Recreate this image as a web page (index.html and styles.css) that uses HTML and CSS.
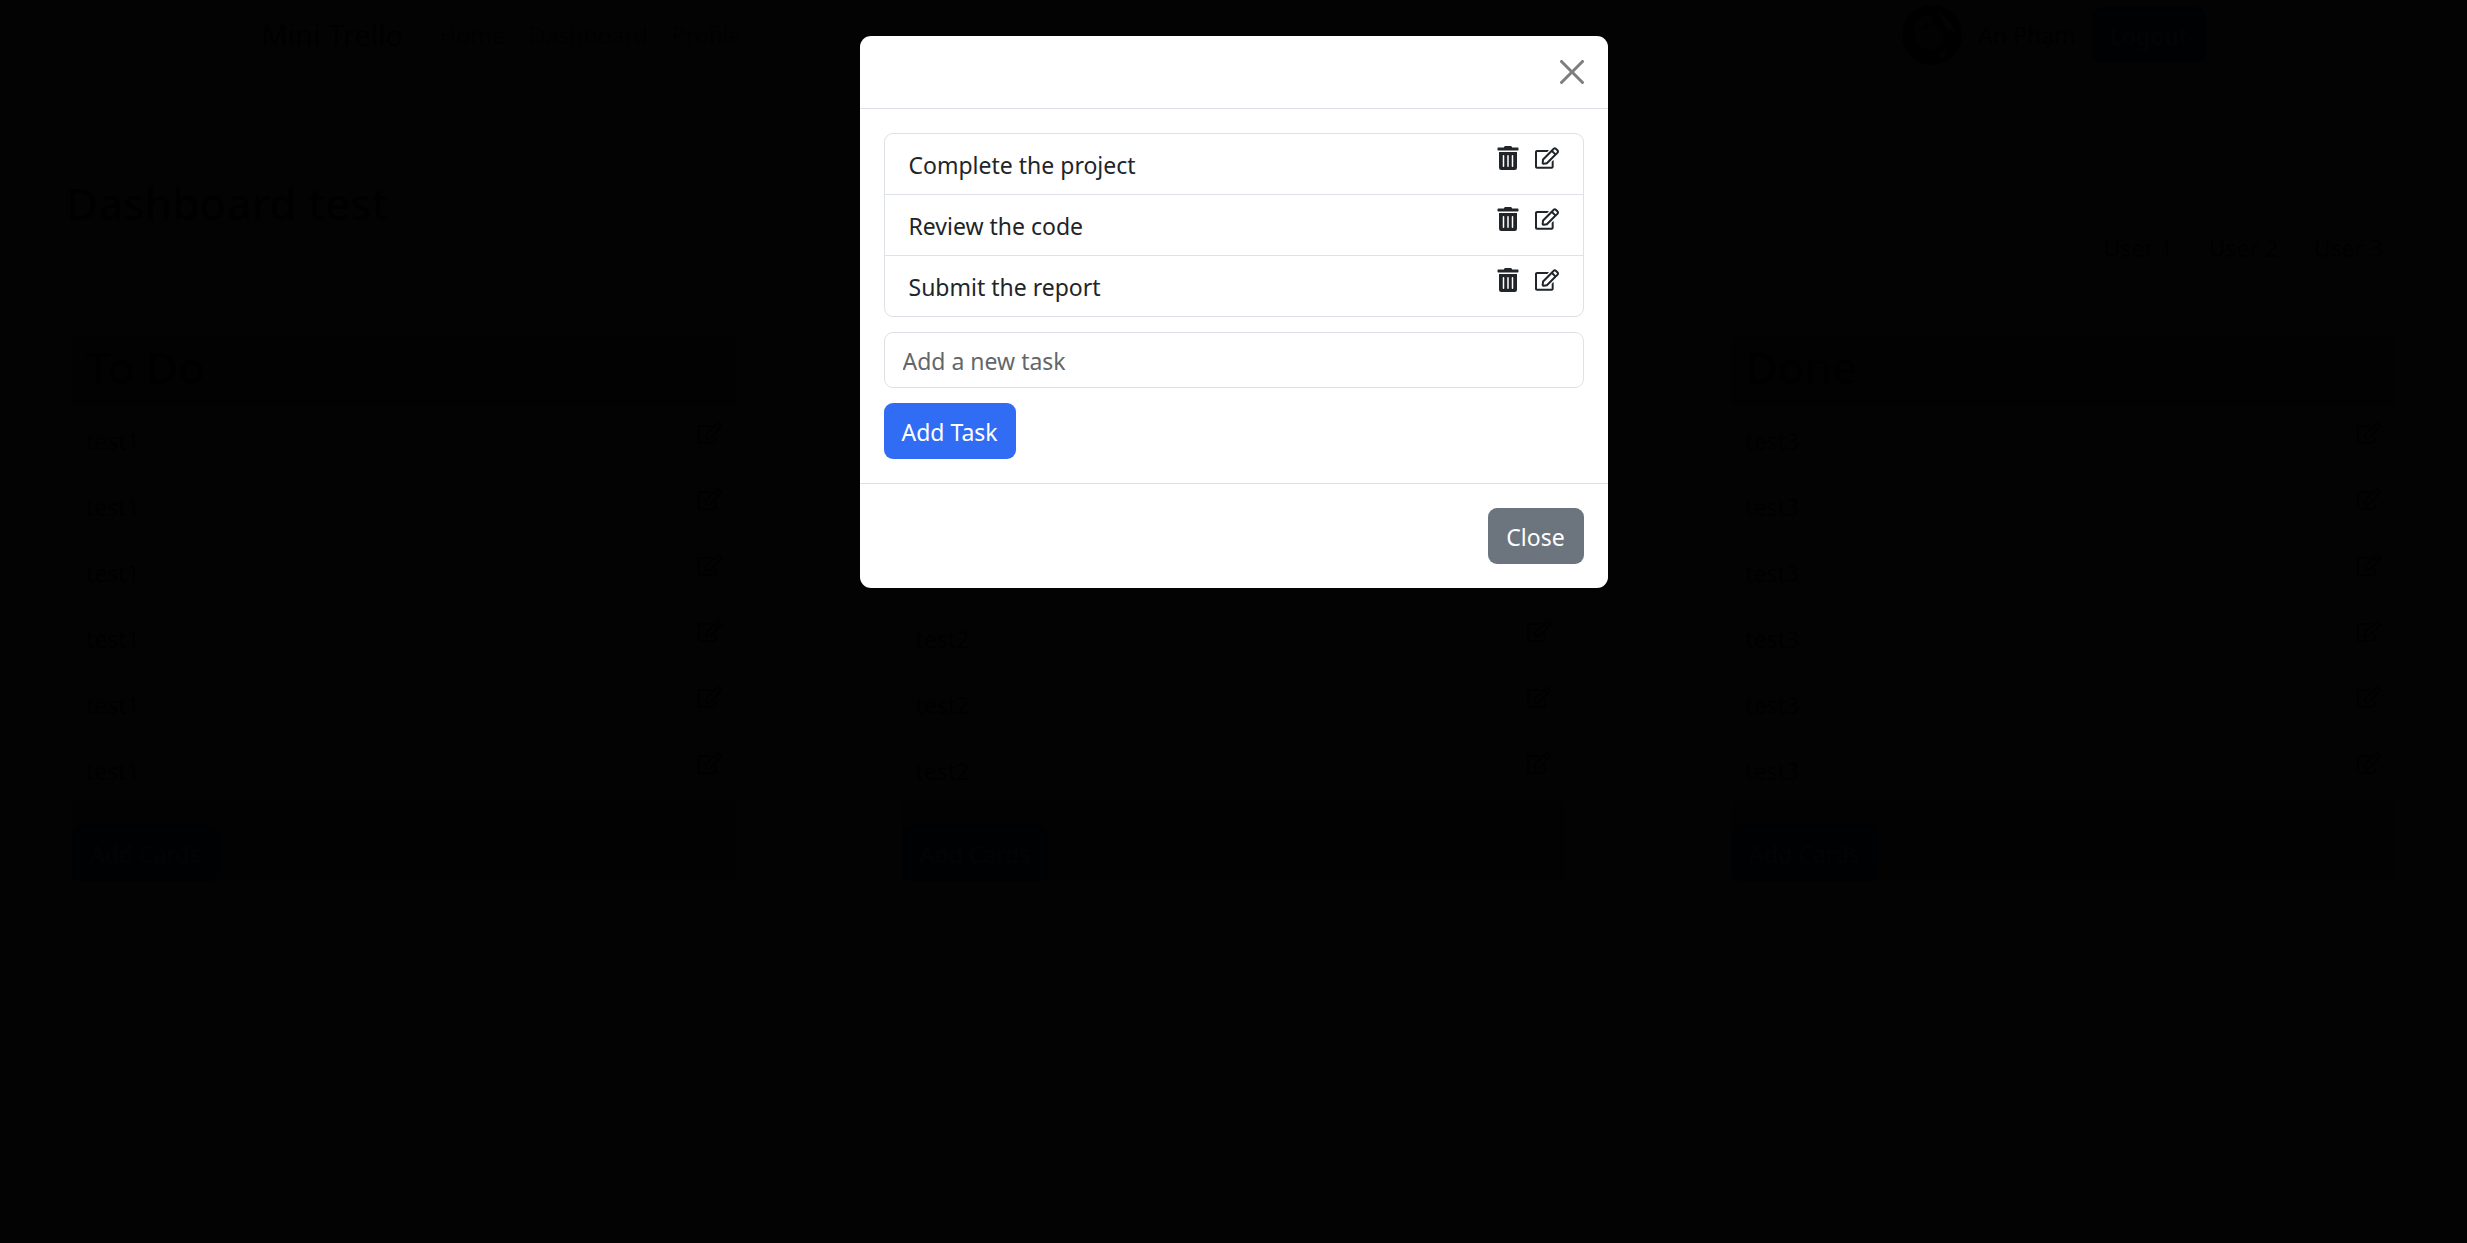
FILE: index.html
```html
<!DOCTYPE html>
<html lang="en">
<head>
<meta charset="utf-8">
<meta name="viewport" content="width=device-width, initial-scale=1">
<title>Mini Trello</title>
<link rel="stylesheet" href="styles.css">
</head>
<body>
<svg class="sprite" aria-hidden="true">
  <symbol id="trash" viewBox="0 0 448 512"><path d="M32 464a48 48 0 0 0 48 48h288a48 48 0 0 0 48-48V128H32zm272-256a16 16 0 0 1 32 0v224a16 16 0 0 1-32 0zm-96 0a16 16 0 0 1 32 0v224a16 16 0 0 1-32 0zm-96 0a16 16 0 0 1 32 0v224a16 16 0 0 1-32 0zM432 32H312l-9.4-18.7A24 24 0 0 0 281.1 0H166.8a23.72 23.72 0 0 0-21.4 13.3L136 32H16A16 16 0 0 0 0 48v32a16 16 0 0 0 16 16h416a16 16 0 0 0 16-16V48a16 16 0 0 0-16-16z"/></symbol>
  <symbol id="edit" viewBox="0 0 576 512"><path d="M402.3 344.9l32-32c5-5 13.7-1.5 13.7 5.7V464c0 26.5-21.5 48-48 48H48c-26.5 0-48-21.5-48-48V112c0-26.5 21.5-48 48-48h273.5c7.1 0 10.7 8.6 5.7 13.7l-32 32c-1.5 1.5-3.5 2.3-5.7 2.3H48v352h352V350.5c0-2.1.8-4.1 2.3-5.6zm156.600-201.800L296.300 405.700l-90.400 10c-26.200 2.900-48.500-19.200-45.600-45.600l10-90.400L432.900 17.100c22.900-22.900 59.900-22.900 82.700 0l43.200 43.200c22.900 22.900 22.900 60 .1 82.800zM460.100 174L402 115.900 216.200 301.800l-7.300 65.300 65.300-7.300L460.100 174zm64.800-79.700l-43.200-43.200c-4.100-4.100-10.800-4.100-14.800 0L436 82l58.100 58.100 30.900-30.900c4-4.200 4-10.800-.1-14.900z"/></symbol>
</svg>

<div class="page">
  <header class="navbar">
    <a class="brand" href="#">Mini Trello</a>
    <nav class="links">
      <a href="#">Home</a>
      <a href="#">Dashboard</a>
      <a href="#">Profile</a>
    </nav>
    <div class="account">
      <svg class="avatar" viewBox="0 0 60 60" aria-hidden="true">
        <circle cx="30" cy="30" r="30" fill="#222"/>
        <path d="M12 20q8-12 20-9l-3 8 10 4q6 12-3 20-16 6-22-8z" fill="#bbb"/>
        <path d="M36 8q14 6 17 20l-8-4zM36 50l8-5-2 8z" fill="#eee"/>
        <circle cx="24" cy="22" r="3" fill="#222"/>
      </svg>
      <span>An Phạm</span>
      <button class="btn btn-primary btn-logout" type="button">Logout</button>
    </div>
  </header>

  <main>
    <div class="board-head">
      <h1>Dashboard test</h1>
      <ul class="members">
        <li><span class="thumb">50 x 50</span>User 1</li>
        <li><span class="thumb">50 x 50</span>User 2</li>
        <li><span class="thumb">50 x 50</span>User 3</li>
      </ul>
    </div>

    <div class="board">
      <section class="column">
        <h2>To Do</h2>
        <ul class="cards">
          <li>test1<svg class="icon"><use href="#edit"/></svg></li>
          <li>test1<svg class="icon"><use href="#edit"/></svg></li>
          <li>test1<svg class="icon"><use href="#edit"/></svg></li>
          <li>test1<svg class="icon"><use href="#edit"/></svg></li>
          <li>test1<svg class="icon"><use href="#edit"/></svg></li>
          <li>test1<svg class="icon"><use href="#edit"/></svg></li>
        </ul>
        <div class="column-foot"><button class="btn btn-primary" type="button">Add Cards</button></div>
      </section>
      <section class="column">
        <ul class="cards">
          <li>test2<svg class="icon"><use href="#edit"/></svg></li>
          <li>test2<svg class="icon"><use href="#edit"/></svg></li>
          <li>test2<svg class="icon"><use href="#edit"/></svg></li>
        </ul>
        <div class="column-foot"><button class="btn btn-primary" type="button">Add Cards</button></div>
      </section>
      <section class="column">
        <h2>Done</h2>
        <ul class="cards">
          <li>test3<svg class="icon"><use href="#edit"/></svg></li>
          <li>test3<svg class="icon"><use href="#edit"/></svg></li>
          <li>test3<svg class="icon"><use href="#edit"/></svg></li>
          <li>test3<svg class="icon"><use href="#edit"/></svg></li>
          <li>test3<svg class="icon"><use href="#edit"/></svg></li>
          <li>test3<svg class="icon"><use href="#edit"/></svg></li>
        </ul>
        <div class="column-foot"><button class="btn btn-primary" type="button">Add Cards</button></div>
      </section>
    </div>
  </main>
</div>

<div class="backdrop">
  <div class="modal" role="dialog" aria-modal="true" aria-label="Tasks">
    <div class="modal-header">
      <button class="icon-btn btn-close" type="button" aria-label="Close dialog">
        <svg class="icon" viewBox="0 0 16 16"><path d="M.293.293a1 1 0 0 1 1.414 0L8 6.586 14.293.293a1 1 0 1 1 1.414 1.414L9.414 8l6.293 6.293a1 1 0 0 1-1.414 1.414L8 9.414l-6.293 6.293a1 1 0 0 1-1.414-1.414L6.586 8 .293 1.707a1 1 0 0 1 0-1.414z"/></svg>
      </button>
    </div>
    <div class="modal-body">
      <ul class="tasks">
        <li>
          <span>Complete the project</span>
          <span class="actions">
            <button class="icon-btn" type="button" aria-label="Delete"><svg class="icon"><use href="#trash"/></svg></button>
            <button class="icon-btn" type="button" aria-label="Edit"><svg class="icon"><use href="#edit"/></svg></button>
          </span>
        </li>
        <li>
          <span>Review the code</span>
          <span class="actions">
            <button class="icon-btn" type="button" aria-label="Delete"><svg class="icon"><use href="#trash"/></svg></button>
            <button class="icon-btn" type="button" aria-label="Edit"><svg class="icon"><use href="#edit"/></svg></button>
          </span>
        </li>
        <li>
          <span>Submit the report</span>
          <span class="actions">
            <button class="icon-btn" type="button" aria-label="Delete"><svg class="icon"><use href="#trash"/></svg></button>
            <button class="icon-btn" type="button" aria-label="Edit"><svg class="icon"><use href="#edit"/></svg></button>
          </span>
        </li>
      </ul>
      <input class="field" type="text" placeholder="Add a new task" aria-label="New task">
      <button class="btn btn-primary" type="button">Add Task</button>
    </div>
    <div class="modal-footer">
      <button class="btn btn-secondary" type="button">Close</button>
    </div>
  </div>
</div>
</body>
</html>
```
FILE: styles.css
```css
* {
  box-sizing: border-box;
}

body {
  margin: 0;
  min-height: 100vh;
  background: #fff;
  color: #212529;
  font-family: "Noto Sans", "Open Sans", sans-serif;
  font-size: 23px;
  line-height: 36px;
}

h1,
h2,
ul {
  margin: 0;
  padding: 0;
  list-style: none;
  font-weight: 500;
}

ul {
  font-weight: 400;
}

a {
  color: inherit;
  text-decoration: none;
}

.sprite {
  display: none;
}

.icon {
  display: block;
  width: 24px;
  height: 24px;
  fill: currentColor;
}

.icon-btn {
  padding: 0;
  border: 0;
  background: none;
  color: inherit;
  cursor: pointer;
}

.btn {
  min-width: 96px;
  height: 56px;
  padding: 2px 18px 0;
  border: 0;
  border-radius: 9px;
  color: #fff;
  font: inherit;
  cursor: pointer;
}

.btn-primary {
  background: #316cf4;
}

.btn-secondary {
  background: #6c757d;
}

/* Navigation */
.navbar {
  display: flex;
  align-items: center;
  max-width: 1980px;
  height: 70px;
  margin: 0 auto;
  padding: 0 18px;
}

.brand {
  margin-right: 36px;
  font-size: 29px;
}

.links {
  display: flex;
  gap: 24px;
  color: #555;
}

.account {
  display: flex;
  align-items: center;
  gap: 16px;
  margin-left: auto;
}

.avatar {
  width: 60px;
  height: 60px;
}

.btn-logout {
  font-weight: 500;
}

/* Board */
.board-head {
  display: flex;
  align-items: flex-start;
  justify-content: space-between;
  padding: 85px 66px 0;
}

h1,
h2 {
  font-size: 44px;
  line-height: 72px;
}

h1 {
  padding-top: 12px;
}

.members {
  display: flex;
}

.members li {
  display: flex;
  flex-direction: column;
  align-items: center;
  width: 105px;
}

.thumb {
  display: grid;
  place-items: center;
  width: 75px;
  height: 75px;
  background: #eee;
  color: #999;
  font-size: 14px;
}

.board {
  display: grid;
  grid-template-columns: repeat(3, 1fr);
  gap: 166px;
  padding: 71px 72px 0;
}

.column {
  display: flex;
  flex-direction: column;
  justify-content: flex-end;
}

.column h2,
.column-foot {
  background: #aaa;
}

.column h2 {
  padding: 0 14px 8px;
  line-height: 60px;
}

.cards li {
  display: flex;
  justify-content: space-between;
  padding: 15px 14px 10px;
  border-top: 1px solid #ddd;
  line-height: 40px;
}

.column-foot {
  padding-top: 24px;
}

.column-foot .btn {
  display: block;
}

/* Dialog */
.backdrop {
  position: fixed;
  inset: 0;
  display: flex;
  align-items: flex-start;
  justify-content: center;
  padding-top: 36px;
  background: rgba(0, 0, 0, 0.99);
}

.modal {
  width: 100%;
  max-width: 748px;
  border-radius: 11px;
  background: #fff;
}

.modal-header {
  display: flex;
  justify-content: flex-end;
  padding: 24px;
  border-bottom: 1px solid #dee2e6;
}

.btn-close {
  opacity: 0.5;
  color: #000;
}

.modal-body {
  display: flex;
  flex-direction: column;
  align-items: flex-start;
  gap: 15px;
  padding: 24px;
}

.tasks {
  width: 100%;
  border: 1px solid #dee2e6;
  border-radius: 9px;
}

.tasks li {
  display: flex;
  justify-content: space-between;
  padding: 12px 24px 10px;
  line-height: 38px;
}

.tasks li + li {
  border-top: 1px solid #dee2e6;
}

.actions {
  display: flex;
  align-items: flex-start;
  gap: 15px;
}

.field {
  width: 100%;
  height: 56px;
  padding: 2px 18px 0;
  border: 1px solid #dee2e6;
  border-radius: 9px;
  background: #fff;
  color: #212529;
  font: inherit;
}

.field::placeholder {
  color: #63676b;
  opacity: 1;
}

.modal-footer {
  display: flex;
  justify-content: flex-end;
  padding: 24px;
  border-top: 1px solid #dee2e6;
}
```
